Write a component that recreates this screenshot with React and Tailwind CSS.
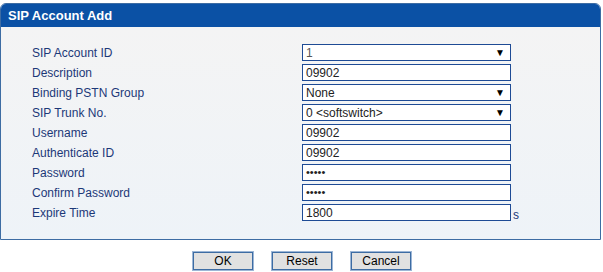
import React from "react";

const rows = [
  { label: "SIP Account ID", type: "select", value: "1", muted: true },
  { label: "Description", type: "text", value: "09902" },
  { label: "Binding PSTN Group", type: "select", value: "None" },
  { label: "SIP Trunk No.", type: "select", value: "0 <softswitch>" },
  { label: "Username", type: "text", value: "09902" },
  { label: "Authenticate ID", type: "text", value: "09902" },
  { label: "Password", type: "pw", value: "•••••" },
  { label: "Confirm Password", type: "pw", value: "•••••" },
  { label: "Expire Time", type: "text", value: "1800", suffix: "s" },
];

export default function App() {
  return (
    <div className="w-[603px] h-[272px] bg-white pt-[3px]" style={{ fontFamily: '"Liberation Sans", Arial, sans-serif' }}>
      <div className="w-[601px] border border-[#3d6ca3] rounded-t-[6px] overflow-hidden">
        <div className="h-[23px] bg-[#0b51a5] flex items-center pl-[7px] text-white font-bold text-[13px]">
          SIP Account Add
        </div>
        <div className="bg-gradient-to-b from-[#f4f4f4] to-[#eef3f8] pt-[17px] pb-[18px] flex flex-col gap-[3px]">
          {rows.map((r) => (
            <div key={r.label} className="flex items-center h-[17px]">
              <div className="w-[301px] pl-[31px] text-[12px] text-[#1c3878] leading-none">{r.label}</div>
              <div className="w-[209px] h-[17px] border border-[#1e4b95] bg-white flex items-center px-[3px] text-[12px] leading-none relative">
                <span className={r.type === "pw" ? "text-[11px] text-[#222]" : r.muted ? "text-[#555]" : "text-[#222]"}>{r.value}</span>
                {r.type === "select" && (
                  <span className="absolute right-[5px] top-[3px] text-[10px] text-black leading-none">▼</span>
                )}
              </div>
              {r.suffix && <span className="ml-[2px] mt-[4px] text-[12px] text-[#1c3878] leading-none">{r.suffix}</span>}
            </div>
          ))}
        </div>
      </div>
      <div className="flex pl-[193px] gap-[19px] mt-[12px]">
        {["OK", "Reset", "Cancel"].map((b) => (
          <button
            key={b}
            className="w-[60px] h-[18px] bg-[#e1e1e1] border border-[#3d6ca3] shadow-[0_0_0_1px_#9cb6d6] text-[12px] text-black leading-none flex items-center justify-center"
          >
            {b}
          </button>
        ))}
      </div>
    </div>
  );
}
